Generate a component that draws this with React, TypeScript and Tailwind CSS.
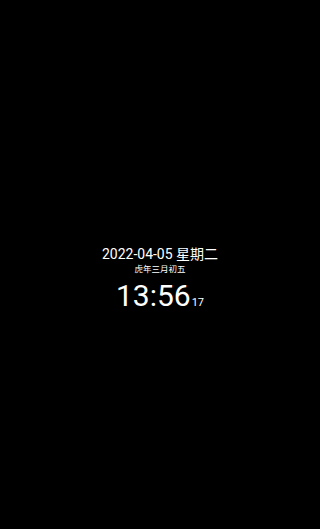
import React from 'react'

export default function App() {
  return (
    <div className="w-[320px] h-[529px] bg-black flex flex-col items-center pt-[245px] text-white" style={{ fontFamily: 'Roboto, "Noto Sans CJK SC", sans-serif' }}>
      {/* Date line */}
      <div className="text-[14px] leading-[18px]">2022-04-05 星期二</div>
      {/* Lunar date */}
      <div className="text-[8.5px] leading-[12px]">虎年三月初五</div>
      {/* Time */}
      <div className="flex items-baseline mt-[4px]">
        <span className="text-[30px] leading-[34px]">13:56</span>
        <span className="text-[11px] leading-[12px] ml-[1px]">17</span>
      </div>
    </div>
  )
}
